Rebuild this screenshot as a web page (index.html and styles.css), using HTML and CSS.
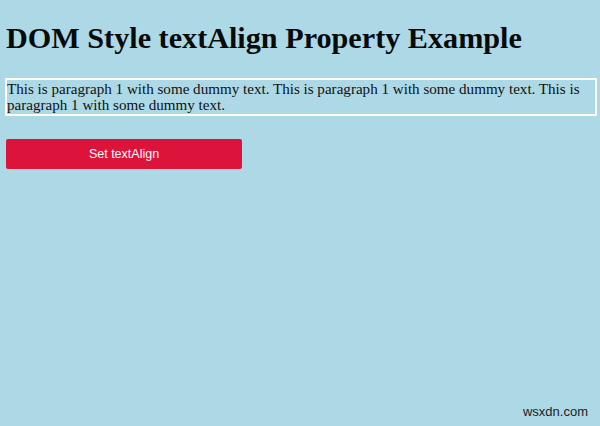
FILE: index.html
```html
<!DOCTYPE html>
<html>
<head>
<meta charset="utf-8">
<link rel="stylesheet" href="styles.css">
</head>
<body>
<h1 class="title">DOM Style textAlign Property Example</h1>
<p class="para">This is paragraph 1 with some dummy text. This is paragraph 1 with some dummy text. This is paragraph 1 with some dummy text.</p>
<button class="btn">Set textAlign</button>
<div class="mark">wsxdn.com</div>
</body>
</html>
```
FILE: styles.css
```css
html, body { height: 100%; }
body {
  margin: 0;
  padding: 0 6px;
  background: #add8e6;
  font-family: "Liberation Serif", "Times New Roman", serif;
  color: #000;
  box-sizing: border-box;
  position: relative;
  overflow: hidden;
}
.title {
  font-size: 30.2px;
  font-weight: bold;
  margin: 0;
  padding-top: 22px;
  line-height: 32px;
  color: #0a0a0a;
}
.para {
  margin: 24px -3px 0 -1px;
  border: 2px solid #fff;
  font-size: 15.1px;
  line-height: 16px;
  padding: 1px 0;
  color: #111;
}
.btn {
  display: block;
  margin-top: 23px;
  width: 236px;
  height: 30px;
  background: #dc143c;
  color: #fff;
  border: none;
  border-radius: 2px;
  font-family: "Liberation Sans", Arial, sans-serif;
  font-size: 12.5px;
  padding: 0;
}
.mark {
  position: absolute;
  right: 12px;
  bottom: 7px;
  font-family: "Liberation Sans", Arial, sans-serif;
  font-size: 13px;
  color: #222;
}
```
